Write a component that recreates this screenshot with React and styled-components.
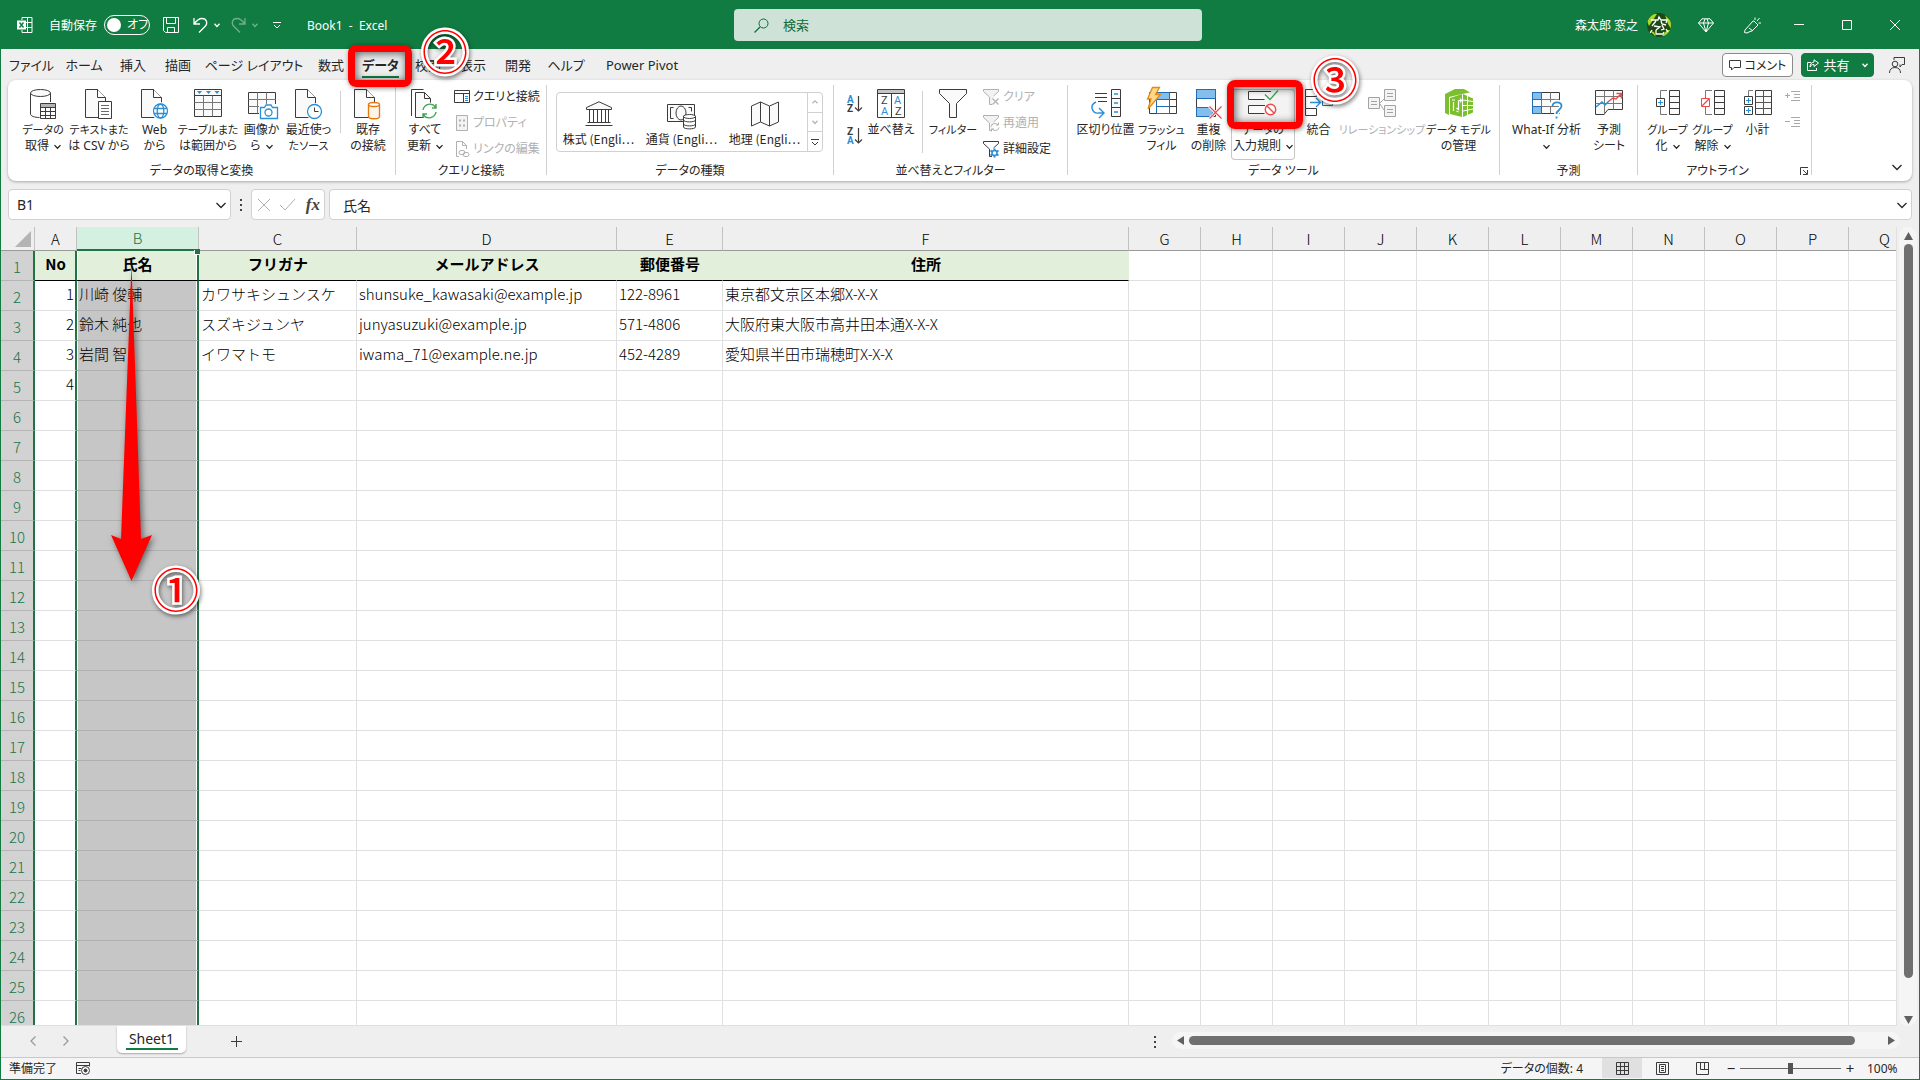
import React from "react";
import styled, { createGlobalStyle, css } from "styled-components";

const colors = {
  green: "#107c41",
  darkGreen: "#217346",
  ink: "#262626",
  line: "#3b3b3b",
  muted: "#b1b1b1",
  blue: "#2b8fd6",
  lightBlue: "#83beec",
  chrome: "#efefef",
  border: "#d0d0d0",
  grid: "#e0e0e0",
  red: "#ff0000"
};

const GlobalStyle = createGlobalStyle`
  * {
    box-sizing: border-box;
    margin: 0;
    padding: 0;
  }

  body {
    overflow: hidden;
    font-family: "Noto Sans", "Noto Sans CJK JP", sans-serif;
    font-size: 12px;
    color: ${colors.ink};
  }

  button, input {
    border: none;
    background: none;
    color: inherit;
    font: inherit;
    font-feature-settings: inherit;
  }

  svg {
    display: block;
    flex: none;
    overflow: visible;
  }
`;

const Window = styled.div`
  display: flex;
  flex-direction: column;
  height: 100vh;
  border: 1px solid ${colors.green};
  border-top: none;
  background: ${colors.chrome};
  font-feature-settings: "palt";
`;

/* ---------- icons ---------- */

const Svg = ({ w = 28, h = 30, children, ...rest }) => (
  <svg width={w} height={h} viewBox={`0 0 ${w} ${h}`} fill="none" stroke={colors.line} aria-hidden="true" {...rest}>
    {children}
  </svg>
);

const Chevron = ({ w = 7, color = "currentColor", up }) => (
  <Svg w={w} h={w} stroke={color} strokeWidth="1.3">
    {up ? <path d={`M.5 ${w * 0.7}L${w / 2} ${w * 0.3}L${w - 0.5} ${w * 0.7}`} /> : <path d={`M.5 ${w * 0.3}L${w / 2} ${w * 0.75}L${w - 0.5} ${w * 0.3}`} />}
  </Svg>
);

const Page = () => (
  <>
    <path d="M.5 .5h12l8 8v20H.5z" fill="#fafafa" />
    <path d="M12.5 .5v8h8" fill="#fff" />
  </>
);

const DatabaseIcon = () => (
  <Svg>
    <path d="M1.5 4v21c0 2 4 3.500 9 3.500M21.500 4v9" />
    <ellipse cx="11.500" cy="4" rx="10" ry="3.500" fill="#fafafa" />
    <path d="M11.500 14.500h15v15h-15z" fill="#fff" />
    <path d="M12 15h14v3H12z" fill="#b5b5b5" stroke="none" />
    <path d="M11.500 18.500h15M11.500 22.500h15M11.500 26.500h15M16.500 18v11M21.500 18v11" />
  </Svg>
);

const TextIcon = () => (
  <Svg>
    <Page />
    <path d="M13.500 12.500h13v17h-13z" fill="#fff" />
    <path d="M16 16.500h8M16 19.500h8M16 22.500h8M16 25.500h8" stroke="#6a6a6a" />
  </Svg>
);

const WebIcon = () => (
  <Svg>
    <Page />
    <circle cx="19.500" cy="22" r="9" fill="#fff" stroke="none" />
    <g stroke={colors.blue} strokeWidth="1.300">
      <circle cx="19.500" cy="22" r="7" />
      <ellipse cx="19.500" cy="22" rx="3.300" ry="7" />
      <path d="M13 19.500h13M13 24.500h13" />
    </g>
  </Svg>
);

const TableIcon = () => (
  <Svg>
    <path d="M.5 .5h27v27H.5z" fill="#fafafa" />
    <path d="M.5 6.500h27" />
    <path d="M.5 13.500h27M.5 20.500h27M9.500 6.500v21M18.500 6.500v21" stroke="#777" />
    <path d="M3 2h5L5.500 5zM12 2h5l-2.500 3zM20.500 2h5L23 5z" fill={colors.blue} stroke="none" />
  </Svg>
);

const CameraIcon = () => (
  <Svg>
    <path d="M.5 3.500h27v21H.5z" fill="#fafafa" />
    <path d="M.5 10.500h27M.5 17.500h27M9.500 3.500v21M18.500 3.500v21" stroke="#777" />
    <path d="M11 15h19v16H11z" fill="#fff" stroke="none" />
    <g stroke={colors.blue} strokeWidth="1.300">
      <path d="M12.500 18.500h4l1.500-2.500h5l1.500 2.500h5v11h-17z" fill="#fff" />
      <circle cx="20.500" cy="23.500" r="3.500" />
    </g>
  </Svg>
);

const ClockIcon = () => (
  <Svg>
    <Page />
    <circle cx="19.500" cy="22.500" r="8.500" fill="#fff" stroke="none" />
    <circle cx="19.500" cy="22.500" r="7" fill="#fff" stroke={colors.blue} strokeWidth="1.300" />
    <path d="M19.500 18.500v4h4" />
  </Svg>
);

const ConnectionIcon = () => (
  <Svg>
    <Page />
    <path d="M14.500 15.500v12c0 3 11 3 11 0v-12" fill="#fdf3e8" stroke="#e8760a" strokeWidth="1.300" />
    <ellipse cx="20" cy="15.500" rx="5.500" ry="2" fill="#fff" stroke="#e8760a" strokeWidth="1.300" />
  </Svg>
);

const RefreshPagesIcon = () => (
  <Svg>
    <path d="M.5 27V.5h12" />
    <path d="M4.500 28.500v-25h9l6 6v18" fill="#fafafa" />
    <path d="M13.500 3.500v6h6M4.500 28.500h9" />
    <circle cx="18.500" cy="22" r="8.500" fill="#fff" stroke="none" />
    <g stroke="#3aa655" strokeWidth="1.400">
      <path d="M12 21a7 7 0 0 1 12.500-3M25 15v4h-4M25 23a7 7 0 0 1-12.500 3M12 29v-4h4" />
    </g>
  </Svg>
);

const QueryPaneIcon = () => (
  <Svg w={16} h={16}>
    <path d="M.5 1.500h15v12H.5z" fill="#fff" />
    <path d="M.5 4.500h15M9.500 4.500v9" />
    <path d="M11 7.500h3M11 9.500h3M11 11.500h3" stroke={colors.blue} />
  </Svg>
);

const PropertiesIcon = () => (
  <Svg w={16} h={16} stroke={colors.muted}>
    <path d="M2.500 .5h11v15h-11z" fill="#f3f3f3" />
    <path d="M5 5.500h2M9 5.500h2M5 10.500h2M9 10.500h2" strokeWidth="2" />
  </Svg>
);

const EditLinksIcon = () => (
  <Svg w={16} h={16} stroke={colors.muted}>
    <path d="M5 15.500H2.500V.5h6l4 4V8M8.500 .5v4h4" />
    <rect x="5" y="9.500" width="6" height="4" rx="2" />
    <rect x="9" y="11.500" width="6" height="4" rx="2" />
  </Svg>
);

const BankIcon = () => (
  <Svg w={28} h={26}>
    <path d="M1.500 8.500v-2L14 .8l12.500 5.700v2z" fill="#fafafa" />
    <path d="M4.500 8.500v13M8.500 8.500v13M12.500 8.500v13M16.500 8.500v13M20.500 8.500v13M23.500 8.500v13M2.500 21.500h23M.5 24.500h27" />
  </Svg>
);

const MoneyIcon = () => (
  <Svg w={30} h={28}>
    <path d="M.5 3.500h27v17H.5z" fill="#fafafa" />
    <path d="M6.500 6.500h-3v11h3M21.500 6.500h3v4" />
    <ellipse cx="14" cy="12" rx="5" ry="7" />
    <path d="M16.500 15v11c0 2.500 12 2.500 12 0V15z" fill="#fff" />
    <ellipse cx="22.500" cy="15.500" rx="6" ry="2" fill="#fff" />
    <path d="M16.500 19c0 2.500 12 2.500 12 0M16.500 23c0 2.500 12 2.500 12 0" />
  </Svg>
);

const MapIcon = () => (
  <Svg w={28} h={26}>
    <path d="M.5 5l9-4 9 4 9-4v20l-9 4-9-4-9 4z" fill="#fafafa" />
    <path d="M9.500 1v20M18.500 5v20" />
  </Svg>
);

const letter = { fontSize: 10, fontWeight: 700, fontFamily: "Roboto, sans-serif", stroke: "none" };

const SortIcon = ({ desc }) => (
  <Svg w={17} h={18}>
    <text x="1" y="8" {...letter} fill={desc ? colors.line : colors.blue}>{desc ? "Z" : "A"}</text>
    <text x="1" y="17" {...letter} fill={desc ? colors.blue : colors.line}>{desc ? "A" : "Z"}</text>
    <path d="M12.500 1v15M9 12.500l3.500 3.500 3.500-3.500" strokeWidth="1.200" />
  </Svg>
);

const SortDialogIcon = () => (
  <Svg>
    <path d="M.5 .5h27v28H.5z" fill="#fff" />
    <path d="M1 1h26v3.500H1z" fill="#c4c4c4" stroke="none" />
    <path d="M.5 4.500h27M14.500 4.500v24" />
    <g fontSize="11" fontFamily="Roboto, sans-serif" stroke="none">
      <text x="4" y="15" fill={colors.line}>Z</text>
      <text x="4" y="26" fill={colors.blue}>A</text>
      <text x="17" y="15" fill={colors.blue}>A</text>
      <text x="18" y="26" fill={colors.line}>Z</text>
    </g>
  </Svg>
);

const FilterIcon = () => (
  <Svg>
    <path d="M.5 .5h27v4l-10 10v14h-7v-14L.5 4.500z" fill="#fafafa" />
  </Svg>
);

const SmallFilter = ({ kind }) => (
  <Svg w={17} h={17} stroke={kind === "gear" ? colors.line : colors.muted}>
    <path d="M9 15.500H6.500V8L.5 2.500v-2h15v2L10.500 7" fill={kind === "gear" ? "none" : "#f2f2f2"} />
    {kind === "clear" && <path d="M9.500 9.500l6 6M15.500 9.500l-6 6" strokeWidth="1.300" />}
    {kind === "again" && <path d="M8 11.500a4 4 0 0 1 7-1.500M15.500 7.500V10H13M16 12.500a4 4 0 0 1-7 1.500M8.500 16.500V14H11" />}
    {kind === "gear" && (
      <g stroke={colors.blue}>
        <path d="M11.500 7.500v9M7.500 9.500l8 5M15.500 9.500l-8 5" strokeWidth="2" />
        <circle cx="11.500" cy="12" r="2.500" fill="#fff" strokeWidth="1.500" />
      </g>
    )}
  </Svg>
);

const TextToColumnsIcon = () => (
  <Svg w={30}>
    <path d="M4 4.500h12M4 8.500h12M7 12.500h9" />
    <path d="M20.500 .5h9v27h-9zM20.500 9.500h9M20.500 18.500h9" fill="#fafafa" />
    <path d="M23 5h4M23 14h4M23 23h4" stroke={colors.blue} strokeWidth="1.400" />
    <path d="M5 13c-7 3-4 12 3 11h5M8 19l5 5-5 5" stroke={colors.blue} strokeWidth="1.400" />
  </Svg>
);

const FlashFillIcon = () => (
  <Svg w={30}>
    <path d="M2.500 3.500h27v21h-27z" fill="#fff" />
    <path d="M10 4h12v7H10z" fill={colors.lightBlue} stroke="none" />
    <path d="M22.500 3.500v21M22 10.500h7.500M22 17.500h7.500" />
    <path d="M9.500 3.500h13v21h-13M9.500 10.500h13M9.500 17.500h13M9.500 3.500v21" stroke="#1f6fb8" />
    <path d="M5.500-1.500h7l-4 7h5L1 20l3-10H.5z" fill="#ffd88a" stroke="#e08a1a" strokeWidth="1.300" />
  </Svg>
);

const DuplicatesIcon = () => (
  <Svg>
    <path d="M1.500 .5h19v27h-19z" fill="#fff" />
    <path d="M1.500 .5h19v9h-19z" fill={colors.lightBlue} stroke="#1f6fb8" />
    <path d="M1.500 18.500h14l3 4-3 5h-14z" fill={colors.lightBlue} stroke="#1f6fb8" />
    <path d="M14 17l13 13M27 17L14 30" stroke="#fff" strokeWidth="3" />
    <path d="M14.500 17.500l12 12M26.500 17.500l-12 12" stroke="#ee4b4b" strokeWidth="1.300" />
  </Svg>
);

const ValidationIcon = () => (
  <Svg w={30}>
    <path d="M23 2.500H.5v8h16M17 16.500H.5v8h16" fill="#fafafa" />
    <path d="M17 5.500l5 5 8-9" stroke="#3aa655" strokeWidth="1.400" />
    <g stroke="#ee4b4b" strokeWidth="1.400">
      <circle cx="22.500" cy="20.500" r="5.200" fill="#fff" />
      <path d="M19 17l7 7" />
    </g>
  </Svg>
);

const ConsolidateIcon = () => (
  <Svg>
    <path d="M.5 .5h11v7H.5zM.5 19.500h11v7H.5z" fill="#fff" />
    <path d="M.5 7.500v12" />
    <path d="M5 13.500h10M11 9l4.500 4.500L11 18" stroke={colors.blue} strokeWidth="1.300" />
    <path d="M17.500 9.500h10v7h-10z" fill="#fff" stroke="#1f6fb8" />
  </Svg>
);

const RelationIcon = () => (
  <Svg stroke="#a3a3a3">
    <path d="M12 14l4-4M12 15l4 6" />
    <path d="M.5 8.500h11v11H.5zM16.500 .5h11v11h-11zM16.500 16.500h11v11h-11z" fill="#f4f4f4" />
    <path d="M3 12.500h6M3 15.500h6M19 4.500h6M19 7.500h6M19 20.500h6M19 23.500h6" />
  </Svg>
);

const DataModelIcon = () => (
  <Svg stroke="none">
    <path d="M0 5L10 0h9l6 3.500-8 1.500-13 3v18l-4-2z" fill="#7cbf2e" />
    <path d="M5 9l12-4v23L5 25z" fill="#7cbf2e" />
    <path d="M18 5l10 4.500v14L18 28z" fill="#7cbf2e" />
    <path d="M8.500 13v9M7 11h3M13.500 11.500v9l-2-1.500M13.500 11.500h3M15 9.500l1.500 2-1.500 2M11.500 22l2 1" stroke="#fff" strokeWidth="1.200" />
    <path d="M18 11l10 1.500M18 16.500h10M18 22l10-2M22.500 7v19" stroke="#fff" />
  </Svg>
);

const WhatIfIcon = () => (
  <Svg w={30}>
    <path d="M.5 3.500h27v21H.5z" fill="#fafafa" />
    <path d="M9.500 3.500v21M18.500 3.500v21M.5 10.500h27M.5 17.500h27" stroke="#777" />
    <path d="M.5 3.500h9v7h-9zM.5 17.500h9v7h-9z" fill={colors.lightBlue} stroke="#1f6fb8" />
    <path d="M.5 10.500v7" stroke="#1f6fb8" />
    <path d="M19.500 17c0-5 10-5 10 0 0 4-5 4-5 8M24.500 27v2.500" stroke="#fff" strokeWidth="5" />
    <path d="M20.500 17c0-5 9-4.500 9 0 0 4-5 4-5 8M24.500 27.500v2" stroke={colors.blue} strokeWidth="1.800" />
  </Svg>
);

const ForecastIcon = () => (
  <Svg>
    <path d="M.5 1.500h27v19H13l-4 5H.5z" fill="#fafafa" />
    <path d="M9.500 1.500v24M18.500 1.500v19M.5 7.500h27M.5 14.500h27" stroke="#777" />
    <path d="M1 18l6-5 3 3 4-4" stroke={colors.blue} strokeWidth="1.500" />
    <path d="M14 12l4-3 3 1 5-5M21.500 4.500h5v5" stroke="#ee4b4b" strokeWidth="1.500" />
  </Svg>
);

const GroupIcon = ({ remove }) => (
  <Svg w={26}>
    <path d="M12 1.500H5.500v24H12" stroke="#777" />
    <path d="M14.500 1.500h10v24h-10z" fill="#fafafa" />
    <path d="M14.500 7.500h10M14.500 13.500h10M14.500 19.500h10" />
    <path d="M1.500 9.500h8v8h-8z" fill="#fff" stroke={remove ? "#ee4b4b" : colors.line} />
    {remove ? <path d="M2 17l7-7" stroke="#ee4b4b" strokeWidth="1.300" /> : <path d="M3 13.500h5M5.500 11v5" stroke={colors.blue} />}
  </Svg>
);

const SubtotalIcon = () => (
  <Svg>
    <path d="M9 1.500H4.500v7" stroke="#777" />
    <path d="M11.500 1.500h16v24h-16z" fill="#fafafa" />
    <path d="M11.500 7.500h16M11.500 13.500h16M11.500 19.500h16M19.500 1.500v24" stroke="#555" />
    <path d="M.5 7.500h8v8h-8zM.5 17.500h8v8h-8z" fill="#fff" />
    <path d="M2 11.500h5M4.500 9v5M2 21.500h5M4.500 19v5" stroke={colors.blue} />
  </Svg>
);

const OutlineIcon = ({ plus }) => (
  <Svg w={16} h={14} stroke="#a8a8a8">
    <path d={plus ? "M0 5.500h5M2.500 3v5" : "M0 5.500h5"} />
    <path d="M6 1.500h9M9 4.500h6M9 7.500h6M6 10.500h9" />
  </Svg>
);

/* ---------- callouts ---------- */

const Marker = styled.span`
  position: absolute;
  z-index: 3;
  pointer-events: none;
  border: 7px solid ${colors.red};
  border-radius: 8px;
  box-shadow: 1px 1px 5px rgba(0, 0, 0, 0.5), inset 1px 1px 8px rgba(0, 0, 0, 0.65);
`;

const TabMarker = styled(Marker)`
  top: -4px;
  left: -7px;
  width: 64px;
  height: 42px;
`;

const ToolMarker = styled(Marker)`
  top: -9px;
  left: -4px;
  width: 76px;
  height: 49px;
`;

const Step = styled.span`
  position: absolute;
  z-index: 4;
  top: ${(p) => p.$top}px;
  left: ${(p) => p.$left}px;
  width: 46px;
  height: 46px;
  pointer-events: none;
  font-family: "Noto Sans CJK JP", sans-serif;
  font-size: 46px;
  font-weight: 500;
  line-height: 46px;
  text-align: center;
  font-feature-settings: normal;
  color: ${colors.red};
  -webkit-text-stroke: 5px #fff;
  paint-order: stroke fill;
  filter: drop-shadow(1px 2px 2px rgba(0, 0, 0, 0.5));
`;

/* ---------- title bar ---------- */

const TitleBar = styled.header`
  display: grid;
  grid-template-columns: 1fr 468px 1fr;
  align-items: center;
  padding: 9px 0 8px 16px;
  background: ${colors.green};
  color: #fff;
`;

const QuickAccess = styled.div`
  display: flex;
  align-items: center;
`;

const AutoSave = styled.label`
  display: flex;
  align-items: center;
  gap: 7px;
  margin: 0 6px 0 16px;
`;

const Toggle = styled.input`
  appearance: none;
  width: 46px;
  height: 20px;
  border: 1px solid #fff;
  border-radius: 10px;
  display: flex;
  align-items: center;
  gap: 6px;
  padding-left: 2px;

  &::before {
    content: "";
    width: 14px;
    height: 14px;
    border-radius: 50%;
    background: #fff;
  }

  &::after {
    content: "オフ";
    line-height: 14px;
  }
`;

const QuickButton = styled.button`
  display: flex;
  align-items: center;
  justify-content: center;
  gap: 6px;
  width: ${(p) => p.$w}px;
  height: 32px;
  opacity: ${(p) => (p.disabled ? 0.4 : 1)};
`;

const DocTitle = styled.h1`
  margin-left: 15px;
  font-size: 12px;
  font-weight: 400;
  white-space: pre;
`;

const SearchBox = styled.label`
  display: flex;
  align-items: center;
  gap: 14px;
  height: 32px;
  padding-left: 20px;
  border-radius: 4px;
  background: #cee2d7;
  color: #0f6b3a;
  font-size: 13px;

  input {
    flex: 1;
    outline: none;
  }

  input::placeholder {
    color: #0f6b3a;
  }
`;

const Account = styled.div`
  display: flex;
  align-items: center;
  justify-content: flex-end;
`;

const UserName = styled.button`
  display: flex;
  align-items: center;
  gap: 9px;
  margin-right: 12px;
  font-size: 12px;
`;

const Avatar = styled.span`
  display: grid;
  place-items: center;
  width: 24px;
  height: 24px;
  overflow: hidden;
  border-radius: 50%;
  background: #1d4a14;
`;

const WindowButton = styled.button`
  display: grid;
  place-items: center;
  width: ${(p) => p.$w || 48}px;
  height: 32px;
`;

/* ---------- ribbon ---------- */

const TabRow = styled.nav`
  display: flex;
  align-items: center;
  height: 31px;
  padding: 0 10px 0 5px;
  font-size: 13px;
`;

const TabItem = styled.div`
  position: relative;
  width: ${(p) => p.$w}px;
`;

const Tab = styled.button`
  display: block;
  margin: 0 auto;
  height: 31px;
  white-space: nowrap;

  ${(p) =>
    p.$active &&
    css`
      font-weight: 700;
      background: linear-gradient(${colors.green}, ${colors.green}) 0 27px / 100% 2px no-repeat;
    `}
`;

const TabActions = styled.div`
  display: flex;
  align-items: center;
  gap: 8px;
  margin-left: auto;
`;

const CommentButton = styled.button`
  display: flex;
  align-items: center;
  justify-content: center;
  gap: 4px;
  width: 71px;
  height: 24px;
  border: 1px solid #8a8a8a;
  border-radius: 4px;
  background: #fff;
  font-size: 12px;
`;

const ShareButton = styled(CommentButton)`
  width: 73px;
  border-color: ${colors.green};
  background: ${colors.green};
  color: #fff;
  font-size: 13px;

  svg:last-child {
    margin-left: 8px;
  }
`;

const PersonButton = styled.button`
  margin-left: 3px;
  padding: 4px;
`;

const RibbonPanel = styled.section`
  display: flex;
  position: relative;
  margin: 0 7px;
  padding: 5px 0 6px;
  border-radius: 8px;
  background: #fff;
  box-shadow: 0 1px 3px rgba(0, 0, 0, 0.3);
`;

const Group = styled.div`
  display: flex;
  flex-direction: column;
  justify-content: space-between;
  position: relative;
  flex: none;
  width: ${(p) => p.$w}px;
  min-height: 90px;
  border-right: 1px solid ${colors.border};
`;

const GroupBody = styled.div`
  display: flex;
  align-items: flex-start;
  padding: 4px 0 0 ${(p) => p.$pad}px;
`;

const GroupName = styled.h2`
  margin-bottom: -4px;
  padding-right: ${(p) => (p.$launcher ? 14 : 0)}px;
  font-size: 12px;
  font-weight: 400;
  line-height: 16px;
  text-align: center;
`;

const Tool = styled.button`
  display: flex;
  flex: none;
  flex-direction: column;
  align-items: center;
  width: ${(p) => p.$w}px;
  line-height: 16px;
  white-space: nowrap;
  color: ${(p) => (p.disabled ? colors.muted : colors.ink)};
`;

const ToolIcon = styled.span`
  display: flex;
  justify-content: center;
  height: 30px;
  margin-bottom: 3px;
`;

const ToolLine = styled.span`
  display: flex;
  align-items: center;
  gap: 5px;
  height: 16px;
  font-size: ${(p) => (p.$kana ? 11 : 12)}px;
`;

const ToolWrap = styled.div`
  position: relative;
`;

const HoverFrame = styled.div`
  padding-bottom: 6px;
  border-radius: 4px;
  box-shadow: inset 0 0 0 1px #c6c6c6;
  background: linear-gradient(#f3f3f3 40px, #fff 40px);
`;

const Divider = styled.span`
  flex: none;
  width: 1px;
  height: ${(p) => p.$h}px;
  margin: 2px 5px 0 8px;
  background: ${colors.border};
`;

const SmallColumn = styled.div`
  display: flex;
  flex-direction: column;
  gap: 6px;
  margin-top: -2px;
  padding-left: 5px;
`;

const SmallTool = styled.button`
  display: flex;
  align-items: center;
  gap: 3px;
  height: 20px;
  line-height: 16px;
  white-space: nowrap;
  color: ${(p) => (p.disabled ? colors.muted : colors.ink)};
`;

const SortColumn = styled.div`
  display: flex;
  flex-direction: column;
  gap: 14px;
  padding: 6px 5px 0 1px;
`;

const Gallery = styled.div`
  display: flex;
  margin-top: 3px;
  border: 1px solid ${colors.border};
  border-radius: 4px;
  overflow: hidden;
`;

const GalleryItem = styled.button`
  display: flex;
  flex-direction: column;
  align-items: center;
  justify-content: space-between;
  width: 83px;
  height: 58px;
  padding: 8px 0 4px;
  font-family: "Noto Sans CJK JP", sans-serif;
  line-height: 16px;
  white-space: nowrap;
`;

const GalleryScroll = styled.div`
  display: flex;
  flex-direction: column;
  width: 15px;
  margin-left: 1px;
  border-left: 1px solid ${colors.border};

  button {
    display: grid;
    place-items: center;
    flex: 1;
  }

  button + button {
    border-top: 1px solid ${colors.border};
  }
`;

const Launcher = styled.button`
  position: absolute;
  right: 3px;
  bottom: 0;
`;

const Collapse = styled.button`
  align-self: flex-end;
  margin: 0 10px 3px auto;
`;

/* ---------- formula bar ---------- */

const FormulaBar = styled.div`
  display: flex;
  align-items: center;
  padding: 8px 7px 7px;
`;

const FieldBox = styled.div`
  display: flex;
  align-items: center;
  width: ${(p) => p.$w}px;
  flex: ${(p) => (p.$w ? "none" : 1)};
  height: 31px;
  padding: 0 4px 0 8px;
  border: 1px solid ${colors.border};
  border-radius: 4px;
  background: #fff;
  font-size: 14px;

  input {
    flex: 1;
    min-width: 0;
    outline: none;
  }
`;

const FormulaBox = styled(FieldBox)`
  padding-left: 13px;
`;

const Dots = styled.span`
  width: 20px;
  display: grid;
  justify-content: center;
  gap: 3px;

  i {
    width: 2px;
    height: 2px;
    background: #444;
  }
`;

const FxBox = styled(FieldBox)`
  justify-content: space-between;
  margin-right: 4px;
  padding: 0 4px 0 6px;
`;

const Fx = styled.em`
  font: italic 700 17px "Liberation Serif", serif;
  color: #444;
`;

/* ---------- grid ---------- */

const SheetArea = styled.main`
  display: flex;
  flex: 1;
  min-height: 0;
`;

const GridClip = styled.div`
  position: relative;
  flex: 1;
  min-width: 0;
  overflow: hidden;
  border-bottom: 1px solid ${colors.grid};
  border-right: 1px solid ${colors.grid};
`;

const Table = styled.table`
  width: 1919px;
  table-layout: fixed;
  border-collapse: separate;
  border-spacing: 0;
  background: #fff;
  font-family: "Noto Sans CJK JP", sans-serif;
  font-size: 15px;
  font-weight: 300;
  font-feature-settings: normal;
  line-height: 20px;
  color: #000;
`;

const Col = styled.col`
  width: ${(p) => p.$w}px;
`;

const ColHead = styled.th`
  position: relative;
  height: 24px;
  font-weight: 300;
  border-right: 1px solid #c2c2c2;
  border-bottom: 1px solid #9a9a9a;
  background: ${colors.chrome};

  ${(p) =>
    p.$selected &&
    css`
      background: #d3f0e0;
      color: ${colors.darkGreen};
      border-bottom: 2px solid ${colors.darkGreen};

      &::after {
        content: "";
        position: absolute;
        z-index: 1;
        right: -2px;
        bottom: -5px;
        width: 5px;
        height: 5px;
        background: ${colors.darkGreen};
        box-shadow: -1px 1px 0 #fff;
      }
    `}
`;

const Corner = styled(ColHead)`
  svg {
    margin-left: 14px;
  }
`;

const RowHead = styled.th`
  height: 30px;
  padding-top: 3px;
  font-weight: 300;
  color: ${colors.darkGreen};
  background: #d2d2d2;
  border-right: 2px solid ${colors.darkGreen};
  border-bottom: 1px solid #b5b5b5;
`;

const Cell = styled.td`
  height: 30px;
  padding: 0 1px 4px 2px;
  white-space: nowrap;
  text-align: ${(p) => p.$align || "left"};
  border-right: 1px solid ${colors.grid};
  border-bottom: 1px solid ${colors.grid};

  ${(p) =>
    p.$before &&
    css`
      border-right: 2px solid ${colors.darkGreen};
    `}

  ${(p) =>
    p.$selected &&
    css`
      background: #c6c6c6;
      border-right: 2px solid ${colors.darkGreen};
      border-bottom-color: #b0b0b0;
      box-shadow: inset 1px 0 #fff, inset -1px 0 #fff;
    `}

  ${(p) =>
    p.$heading &&
    css`
      background: #e2efda;
      font-weight: 700;
      text-align: center;
      border-bottom-color: #000;
      border-right-color: ${p.$before || p.$selected ? colors.darkGreen : "#e2efda"};
    `}
`;

const Arrow = styled.svg`
  position: absolute;
  top: 37px;
  left: 109px;
  filter: drop-shadow(2px 2px 3px rgba(0, 0, 0, 0.5));
`;

const VScroll = styled.div`
  display: flex;
  flex-direction: column;
  align-items: center;
  gap: 4px;
  width: 18px;
  margin: 0 2px;
  padding: 5px 0 2px;
  border-radius: 9px;
  background: #f5f5f5;
`;

const VThumb = styled.div`
  flex: 1;
  width: 9px;
  margin-bottom: 34px;
  border-radius: 5px;
  background: #707070;
`;

/* ---------- bottom bars ---------- */

const SheetBar = styled.div`
  display: flex;
  align-items: flex-start;
  height: 31px;
  padding: 0 19px 0 15px;
`;

const SheetNav = styled.button`
  display: grid;
  place-items: center;
  width: 33px;
  height: 30px;
`;

const SheetTab = styled.button`
  width: 69px;
  height: 27px;
  margin-left: 35px;
  border-radius: 0 0 5px 5px;
  background: linear-gradient(${colors.green}, ${colors.green}) center 22px / 52px 2px no-repeat, #fff;
  box-shadow: 0 1px 2px rgba(0, 0, 0, 0.3);
  font-size: 14px;
  line-height: 24px;
  padding-bottom: 2px;
`;

const AddSheet = styled(SheetNav)`
  margin: 0 auto 0 34px;
`;

const HScroll = styled.div`
  display: flex;
  align-items: center;
  gap: 5px;
  flex: 0 1 728px;
  height: 17px;
  margin: 6px 0 0 7px;
  padding: 0 5px;
  border-radius: 9px;
  background: #f5f5f5;
`;

const HThumb = styled.div`
  flex: 1;
  height: 9px;
  margin-right: 28px;
  border-radius: 5px;
  background: #707070;
`;

const DotsTall = styled(Dots)`
  margin-top: 10px;
`;

const StatusBar = styled.footer`
  display: flex;
  align-items: center;
  height: 22px;
  padding: 0 18px 1px 8px;
  border-top: 1px solid #c8c8c8;
  background: #f5f5f5;
`;

const MacroButton = styled.button`
  margin: 0 auto 0 19px;
`;

const ViewButton = styled.button`
  display: grid;
  place-items: center;
  width: 40px;
  height: 20px;
  background: ${(p) => (p.$on ? "#e0e0e0" : "none")};
`;

const Count = styled.span`
  margin-right: 19px;
`;

const ZoomButton = styled.button`
  width: 18px;
  font-size: 15px;
  line-height: 18px;
`;

const ZoomSlider = styled.input`
  appearance: none;
  width: 101px;
  height: 12px;
  background: linear-gradient(#666, #666) 0 6px / 100% 1px no-repeat;

  &::-webkit-slider-thumb {
    appearance: none;
    width: 5px;
    height: 11px;
    background: #555;
  }
`;

const Percent = styled.span`
  width: 34px;
  margin-left: 8px;
`;

/* ---------- data ---------- */

const tabs = [
  ["ファイル", 51],
  ["ホーム", 54],
  ["挿入", 44],
  ["描画", 46],
  ["ページ レイアウト", 106],
  ["数式", 48],
  ["データ", 51],
  ["校閲", 44],
  ["表示", 46],
  ["開発", 44],
  ["ヘルプ", 52],
  ["Power Pivot", 100]
];

const columns = [
  ["A", 42],
  ["B", 122],
  ["C", 158],
  ["D", 260],
  ["E", 106],
  ["F", 406],
  ..."GHIJKLMNOPQ".split("").map((name) => [name, 72])
];

const rows = [
  ["No", "氏名", "フリガナ", "メールアドレス", "郵便番号", "住所"],
  ["1", "川崎 俊輔", "カワサキシュンスケ", "shunsuke_kawasaki@example.jp", "122-8961", "東京都文京区本郷X-X-X"],
  ["2", "鈴木 純也", "スズキジュンヤ", "junyasuzuki@example.jp", "571-4806", "大阪府東大阪市高井田本通X-X-X"],
  ["3", "岩間 智", "イワマトモ", "iwama_71@example.ne.jp", "452-4289", "愛知県半田市瑞穂町X-X-X"],
  ["4"]
];

// long kana-only lines get the smaller label size
const isLongKana = (line) => line.length > 3 && /^[\u3040-\u30ff ]+$/.test(line);

const RibbonTool = ({ icon, lines, w, menu, disabled }) => (
  <Tool $w={w} disabled={disabled}>
    <ToolIcon>{icon}</ToolIcon>
    {lines.map((line, i) => (
      <ToolLine key={i} $kana={isLongKana(line)}>
        {line}
        {menu && i === lines.length - 1 && <Chevron />}
      </ToolLine>
    ))}
  </Tool>
);

const Small = ({ icon, children, disabled }) => (
  <SmallTool disabled={disabled}>
    {icon}
    {children}
  </SmallTool>
);

const Title = () => (
  <TitleBar>
    <QuickAccess>
      <Svg w={16} h={16} stroke="#fff">
        <path d="M5 3V.5h10v15H5V13M10.500 .5v15M5 5.500h10M9 10.500h6" />
        <path d="M0 3.500h9v9H0z" fill="#fff" stroke="none" />
        <path d="M2.500 5.500l4 5M6.500 5.500l-4 5" stroke={colors.green} strokeWidth="1.400" />
      </Svg>
      <AutoSave>
        自動保存
        <Toggle type="checkbox" role="switch" />
      </AutoSave>
      <QuickButton $w={30} aria-label="上書き保存">
        <Svg w={16} h={16} stroke="#fff">
          <path d="M.5 .5h15v15h-13l-2-2zM3.500 .5v6h9v-6M4.500 15.500v-5h7v5" />
        </Svg>
      </QuickButton>
      <QuickButton $w={40} aria-label="元に戻す">
        <Svg w={15} h={16} stroke="#fff" strokeWidth="1.300">
          <path d="M1 1v6h6M1 7c3-4 5-5.500 8-5.500 5 0 6 5 3 8l-6 6" />
        </Svg>
        <Chevron w={6} />
      </QuickButton>
      <QuickButton $w={36} aria-label="やり直し" disabled>
        <Svg w={15} h={16} stroke="#fff" strokeWidth="1.300">
          <path d="M14 1v6H8M14 7c-3-4-5-5.500-8-5.500-5 0-6 5-3 8l6 6" />
        </Svg>
        <Chevron w={6} />
      </QuickButton>
      <QuickButton $w={30} aria-label="クイック アクセス ツール バーのユーザー設定">
        <Svg w={8} h={8} stroke="#fff">
          <path d="M0 1.500h8M1 4l3 3 3-3" />
        </Svg>
      </QuickButton>
      <DocTitle>{"Book1  -  Excel"}</DocTitle>
    </QuickAccess>
    <SearchBox>
      <Svg w={15} h={15} stroke="#0f6b3a">
        <circle cx="9.500" cy="5.500" r="4.500" />
        <path d="M6 9L.5 14.500" strokeWidth="1.300" />
      </Svg>
      <input type="search" placeholder="検索" aria-label="検索" />
    </SearchBox>
    <Account>
      <UserName>
        森太郎 窓之
        <Avatar>
          <Svg w={24} h={24} stroke="none">
            <path d="M0 8l5-7h5L2 13zM18 2l6 6v8l-3-5zM3 18l4 1 2 5zM20 17l-5 6h5l4-6z" fill="#a8d82a" />
            <path d="M4 7h7l1-3 2 3h6l-1 3M9 8l-4 5M14 8l1 3 4 1M7 13l6 1-4 3M15 12l2 4-3 1M5 17l-2 3M9 17v4h7l1-2M19 16l2 3" stroke="#fff" strokeWidth="1.300" />
          </Svg>
        </Avatar>
      </UserName>
      <WindowButton $w={46} aria-label="Microsoft 365">
        <Svg w={16} h={15} stroke="#fff">
          <path d="M4 .8h8l3.500 4.200L8 14 .5 5zM.5 5h15M5.500 5L8 14l2.500-9M5.500 5L7 1M10.500 5L9 1" />
        </Svg>
      </WindowButton>
      <WindowButton $w={46} aria-label="近日公開の機能">
        <Svg w={17} h={17} stroke="#fff">
          <path d="M10 4l4 4-6 6-2 .5L3 16l-2.500-.5L1 13l8-9zM5 11l4 3M11 3V.5M13 4l2.500-3M14.500 6h2.500" />
        </Svg>
      </WindowButton>
      <WindowButton aria-label="最小化">
        <Svg w={10} h={10} stroke="#fff"><path d="M0 4.500h10" /></Svg>
      </WindowButton>
      <WindowButton aria-label="最大化">
        <Svg w={10} h={10} stroke="#fff"><path d="M.5 .5h9v9h-9z" /></Svg>
      </WindowButton>
      <WindowButton aria-label="閉じる">
        <Svg w={10} h={10} stroke="#fff"><path d="M0 0l10 10M10 0L0 10" /></Svg>
      </WindowButton>
    </Account>
  </TitleBar>
);

const Tabs = () => (
  <TabRow>
    {tabs.map(([name, w]) => (
      <TabItem key={name} $w={w}>
        <Tab $active={name === "データ"}>{name}</Tab>
        {name === "データ" && (
          <>
            <TabMarker />
            <Step $top={-23} $left={67}>②</Step>
          </>
        )}
      </TabItem>
    ))}
    <TabActions>
      <CommentButton>
        <Svg w={12} h={12}><path d="M.5 1.500h11v7H5l-2.500 2.500V8.500h-2z" /></Svg>
        コメント
      </CommentButton>
      <ShareButton>
        <Svg w={12} h={12} stroke="#fff">
          <path d="M4 3.500H.5v8h9V9M7 .8L11.500 4 7 7.500V5.500C5 5.500 4 6 3 8c0-3 1.500-4.500 4-5z" />
        </Svg>
        共有
        <Chevron w={6} />
      </ShareButton>
      <PersonButton aria-label="フィードバック">
        <Svg w={16} h={16}>
          <path d="M5 3V.5h10.500v7H13L11 10V7.500" />
          <circle cx="6" cy="7" r="2.800" />
          <path d="M.5 16c0-3.500 2-5.500 5.500-5.500s5.500 2 5.500 5.500" />
        </Svg>
      </PersonButton>
    </TabActions>
  </TabRow>
);

const Ribbon = () => (
  <RibbonPanel>
    <Group $w={388}>
      <GroupBody $pad={11}>
        <RibbonTool w={48} icon={<DatabaseIcon />} lines={["データの", "取得"]} menu />
        <RibbonTool w={64} icon={<TextIcon />} lines={["テキストまた", "は CSV から"]} />
        <RibbonTool w={47} icon={<WebIcon />} lines={["Web", "から"]} />
        <RibbonTool w={60} icon={<TableIcon />} lines={["テーブルまた", "は範囲から"]} />
        <RibbonTool w={47} icon={<CameraIcon />} lines={["画像か", "ら"]} menu />
        <RibbonTool w={47} icon={<ClockIcon />} lines={["最近使っ", "たソース"]} />
        <Divider $h={42} />
        <RibbonTool w={44} icon={<ConnectionIcon />} lines={["既存", "の接続"]} />
      </GroupBody>
      <GroupName>データの取得と変換</GroupName>
    </Group>
    <Group $w={151}>
      <GroupBody $pad={5}>
        <RibbonTool w={48} icon={<RefreshPagesIcon />} lines={["すべて", "更新"]} menu />
        <SmallColumn>
          <Small icon={<QueryPaneIcon />}>クエリと接続</Small>
          <Small icon={<PropertiesIcon />} disabled>プロパティ</Small>
          <Small icon={<EditLinksIcon />} disabled>リンクの編集</Small>
        </SmallColumn>
      </GroupBody>
      <GroupName>クエリと接続</GroupName>
    </Group>
    <Group $w={287}>
      <GroupBody $pad={9}>
        <Gallery>
          <GalleryItem><BankIcon />株式 (Engli…</GalleryItem>
          <GalleryItem><MoneyIcon />通貨 (Engli…</GalleryItem>
          <GalleryItem><MapIcon />地理 (Engli…</GalleryItem>
          <GalleryScroll>
            <button aria-label="上へ"><Chevron w={6} up color="#b5b5b5" /></button>
            <button aria-label="下へ"><Chevron w={6} color="#b5b5b5" /></button>
            <button aria-label="その他">
              <Svg w={8} h={8}><path d="M0 1.500h8M1 4l3 3 3-3" /></Svg>
            </button>
          </GalleryScroll>
        </Gallery>
      </GroupBody>
      <GroupName>データの種類</GroupName>
    </Group>
    <Group $w={234}>
      <GroupBody $pad={11}>
        <SortColumn>
          <button aria-label="昇順"><SortIcon /></button>
          <button aria-label="降順"><SortIcon desc /></button>
        </SortColumn>
        <RibbonTool w={46} icon={<SortDialogIcon />} lines={["並べ替え"]} />
        <Divider $h={62} />
        <RibbonTool w={50} icon={<FilterIcon />} lines={["フィルター"]} />
        <SmallColumn>
          <Small icon={<SmallFilter kind="clear" />} disabled>クリア</Small>
          <Small icon={<SmallFilter kind="again" />} disabled>再適用</Small>
          <Small icon={<SmallFilter kind="gear" />}>詳細設定</Small>
        </SmallColumn>
      </GroupBody>
      <GroupName>並べ替えとフィルター</GroupName>
    </Group>
    <Group $w={432}>
      <GroupBody $pad={6}>
        <RibbonTool w={63} icon={<TextToColumnsIcon />} lines={["区切り位置"]} />
        <RibbonTool w={49} icon={<FlashFillIcon />} lines={["フラッシュ", "フィル"]} />
        <RibbonTool w={45} icon={<DuplicatesIcon />} lines={["重複", "の削除"]} />
        <ToolWrap>
          <HoverFrame>
            <RibbonTool w={64} icon={<ValidationIcon />} lines={["データの", "入力規則"]} menu />
          </HoverFrame>
          <ToolMarker />
          <Step $top={-35} $left={81}>③</Step>
        </ToolWrap>
        <RibbonTool w={47} icon={<ConsolidateIcon />} lines={["統合"]} />
        <RibbonTool w={80} icon={<RelationIcon />} lines={["リレーションシップ"]} disabled />
        <RibbonTool w={73} icon={<DataModelIcon />} lines={["データ モデル", "の管理"]} />
      </GroupBody>
      <GroupName>データ ツール</GroupName>
    </Group>
    <Group $w={138}>
      <GroupBody $pad={7}>
        <RibbonTool w={79} icon={<WhatIfIcon />} lines={["What-If 分析", ""]} menu />
        <RibbonTool w={46} icon={<ForecastIcon />} lines={["予測", "シート"]} />
      </GroupBody>
      <GroupName>予測</GroupName>
    </Group>
    <Group $w={174}>
      <GroupBody $pad={7}>
        <RibbonTool w={45} icon={<GroupIcon />} lines={["グループ", "化"]} menu />
        <RibbonTool w={45} icon={<GroupIcon remove />} lines={["グループ", "解除"]} menu />
        <RibbonTool w={45} icon={<SubtotalIcon />} lines={["小計"]} />
        <SmallColumn>
          <SmallTool disabled aria-label="詳細データの表示"><OutlineIcon plus /></SmallTool>
          <SmallTool disabled aria-label="詳細を表示しない"><OutlineIcon /></SmallTool>
        </SmallColumn>
      </GroupBody>
      <GroupName $launcher>アウトライン</GroupName>
      <Launcher aria-label="アウトラインの設定">
        <Svg w={8} h={8}><path d="M.5 8V.5H8M3 3l4 4M7.500 3v4.500H3" /></Svg>
      </Launcher>
    </Group>
    <Collapse aria-label="リボンを折りたたむ"><Chevron w={10} /></Collapse>
  </RibbonPanel>
);

const Formula = () => (
  <FormulaBar>
    <FieldBox $w={223}>
      <input defaultValue="B1" aria-label="名前ボックス" />
      <Chevron w={10} />
    </FieldBox>
    <Dots><i /><i /><i /></Dots>
    <FxBox $w={74}>
      <Svg w={12} h={12} stroke={colors.muted}><path d="M0 0l12 12M12 0L0 12" /></Svg>
      <Svg w={15} h={12} stroke={colors.muted}><path d="M0 6l5 5L15 0" /></Svg>
      <Fx>fx</Fx>
    </FxBox>
    <FormulaBox>
      <input defaultValue="氏名" aria-label="数式バー" />
      <Chevron w={10} />
    </FormulaBox>
  </FormulaBar>
);

const Grid = () => (
  <SheetArea>
    <GridClip>
      <Table>
        <colgroup>
          <Col $w={34} />
          {columns.map(([name, w]) => <Col key={name} $w={w} />)}
        </colgroup>
        <thead>
          <tr>
            <Corner aria-label="すべて選択">
              <Svg w={16} h={16} stroke="none"><path d="M16 0v16H0z" fill="#b4b4b4" /></Svg>
            </Corner>
            {columns.map(([name]) => (
              <ColHead key={name} scope="col" $selected={name === "B"}>{name}</ColHead>
            ))}
          </tr>
        </thead>
        <tbody>
          {Array.from({ length: 26 }, (_, r) => (
            <tr key={r}>
              <RowHead scope="row">{r + 1}</RowHead>
              {columns.map(([name], c) => (
                <Cell
                  key={name}
                  $before={c === 0}
                  $selected={c === 1}
                  $heading={r === 0 && c < 6}
                  $align={c === 0 ? "right" : "left"}
                >
                  {rows[r] && rows[r][c]}
                </Cell>
              ))}
            </tr>
          ))}
        </tbody>
      </Table>
      <Arrow width="43" height="318" viewBox="0 0 43 318" aria-hidden="true">
        <path d="M21.500 0L31 275l11-4-20.500 46L1 271l10 4z" fill={colors.red} />
      </Arrow>
      <Step $top={337} $left={152}>①</Step>
    </GridClip>
    <VScroll>
      <Svg w={9} h={8} stroke="none"><path d="M4.500 0L9 8H0z" fill="#606060" /></Svg>
      <VThumb />
      <Svg w={9} h={8} stroke="none"><path d="M0 0h9L4.500 8z" fill="#606060" /></Svg>
    </VScroll>
  </SheetArea>
);

const Bottom = () => (
  <>
    <SheetBar>
      <SheetNav aria-label="前のシート">
        <Svg w={6} h={10} stroke="#9a9a9a" strokeWidth="1.300"><path d="M5.500 .5L1 5l4.500 4.500" /></Svg>
      </SheetNav>
      <SheetNav aria-label="次のシート">
        <Svg w={6} h={10} stroke="#9a9a9a" strokeWidth="1.300"><path d="M.5 .5L5 5 .5 9.500" /></Svg>
      </SheetNav>
      <SheetTab>Sheet1</SheetTab>
      <AddSheet aria-label="新しいシート">
        <Svg w={11} h={11}><path d="M5.500 0v11M0 5.500h11" /></Svg>
      </AddSheet>
      <DotsTall><i /><i /><i /></DotsTall>
      <HScroll>
        <Svg w={7} h={9} stroke="none"><path d="M7 0v9L0 4.500z" fill="#606060" /></Svg>
        <HThumb />
        <Svg w={7} h={9} stroke="none"><path d="M0 0v9l7-4.500z" fill="#606060" /></Svg>
      </HScroll>
    </SheetBar>
    <StatusBar>
      準備完了
      <MacroButton aria-label="マクロの記録">
        <Svg w={14} h={13}>
          <path d="M5 11.500H.5V.5h13v4M.5 3.500h13M2.500 6.500h3M2.500 8.500h2" />
          <circle cx="9.500" cy="8.500" r="4" fill="#fff" />
          <circle cx="9.500" cy="8.500" r="1.500" fill={colors.line} />
        </Svg>
      </MacroButton>
      <Count>データの個数: 4</Count>
      <ViewButton $on aria-label="標準">
        <Svg w={13} h={13}><path d="M.5 .5h12v12H.5zM4.500 .5v12M8.500 .5v12M.5 4.500h12M.5 8.500h12" /></Svg>
      </ViewButton>
      <ViewButton aria-label="ページ レイアウト">
        <Svg w={13} h={13}><path d="M.5 .5h12v12H.5zM3.500 2.500h6v8h-6zM5 4.500h3M5 6.500h3M5 8.500h3" /></Svg>
      </ViewButton>
      <ViewButton aria-label="改ページ プレビュー">
        <Svg w={13} h={13}><path d="M.5 .5h12v12H.5zM4.500 .5v7h8M8.500 .5v7" /></Svg>
      </ViewButton>
      <ZoomButton aria-label="縮小">−</ZoomButton>
      <ZoomSlider type="range" min="0" max="200" defaultValue="100" aria-label="ズーム" />
      <ZoomButton aria-label="拡大">+</ZoomButton>
      <Percent>100%</Percent>
    </StatusBar>
  </>
);

const App = () => (
  <>
    <GlobalStyle />
    <Window>
      <Title />
      <Tabs />
      <Ribbon />
      <Formula />
      <Grid />
      <Bottom />
    </Window>
  </>
);

export default App;
